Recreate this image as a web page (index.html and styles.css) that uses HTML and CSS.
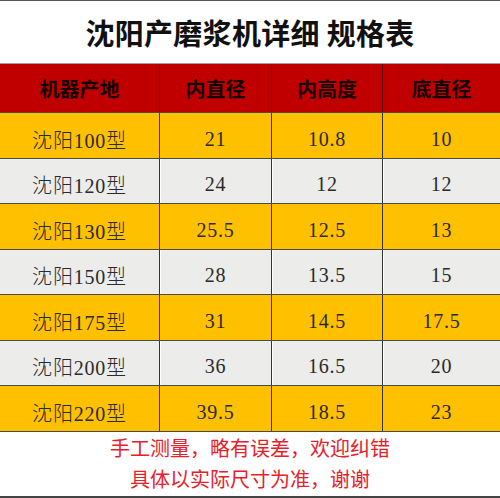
FILE: index.html
```html
<!DOCTYPE html>
<html lang="zh">
<head>
<meta charset="utf-8">
<title>沈阳产磨浆机详细 规格表</title>
<link rel="stylesheet" href="styles.css">
</head>
<body>
<div class="page">
  <h1 class="title">沈阳产磨浆机详细 规格表</h1>
  <div class="table">
    <div class="row head">
      <div class="cell">机器产地</div>
      <div class="cell">内直径</div>
      <div class="cell">内高度</div>
      <div class="cell">底直径</div>
    </div>
    <div class="row yellow">
      <div class="cell">沈阳100型</div>
      <div class="cell">21</div>
      <div class="cell">10.8</div>
      <div class="cell">10</div>
    </div>
    <div class="row gray">
      <div class="cell">沈阳120型</div>
      <div class="cell">24</div>
      <div class="cell">12</div>
      <div class="cell">12</div>
    </div>
    <div class="row yellow">
      <div class="cell">沈阳130型</div>
      <div class="cell">25.5</div>
      <div class="cell">12.5</div>
      <div class="cell">13</div>
    </div>
    <div class="row gray">
      <div class="cell">沈阳150型</div>
      <div class="cell">28</div>
      <div class="cell">13.5</div>
      <div class="cell">15</div>
    </div>
    <div class="row yellow">
      <div class="cell">沈阳175型</div>
      <div class="cell">31</div>
      <div class="cell">14.5</div>
      <div class="cell">17.5</div>
    </div>
    <div class="row gray">
      <div class="cell">沈阳200型</div>
      <div class="cell">36</div>
      <div class="cell">16.5</div>
      <div class="cell">20</div>
    </div>
    <div class="row yellow last">
      <div class="cell">沈阳220型</div>
      <div class="cell">39.5</div>
      <div class="cell">18.5</div>
      <div class="cell">23</div>
    </div>
  </div>
  <div class="note">
    <p>手工测量，略有误差，欢迎纠错</p>
    <p>具体以实际尺寸为准，谢谢</p>
  </div>
</div>
</body>
</html>
```
FILE: styles.css
```css
* { box-sizing: border-box; }
html, body { margin: 0; padding: 0; background: #fff; }
.page {
  width: 500px;
  height: 498px;
  border-top: 1px solid #555;
  display: flex;
  flex-direction: column;
  font-family: "Noto Sans CJK SC", "Noto Sans", sans-serif;
}
.title {
  margin: 0;
  height: 62px;
  display: flex;
  align-items: center;
  justify-content: center;
  font-size: 29px;
  font-weight: 700;
  color: #111;
  letter-spacing: 0.3px;
}
.table { display: flex; flex-direction: column; }
.row {
  display: grid;
  grid-template-columns: 159px 112px 111px 1fr;
  height: 45.5px;
  border-top: 1px solid #4a4a4a;
}
.row.head {
  height: 49px;
  border-top: 1px solid #a0a0a0;
  background: #c00000;
}
.row.last { height: 46.5px; border-bottom: 1px solid #4a4a4a; }
.yellow { background: #ffc000; }
.gray { background: #ececea; }
.cell {
  display: flex;
  align-items: center;
  justify-content: center;
  padding-top: 8px;
  font-family: "Liberation Serif", "Noto Sans CJK SC", serif;
  font-size: 20px;
  font-weight: 300;
  color: #2a2a2a;
  letter-spacing: 0.8px;
}
.cell + .cell { border-left: 1px solid #333; }
.gray .cell + .cell { box-shadow: inset 1px 0 0 #fff; }
.head .cell {
  padding-top: 0;
  font-family: "Noto Sans CJK SC", sans-serif;
  font-weight: 700;
  color: #160000;
  letter-spacing: 0;
}
.head .cell + .cell { border-left-color: #5a0000; }
.note {
  flex: 1;
  border-bottom: 2px solid #444;
  text-align: center;
  color: #e8202a;
  font-size: 20px;
  padding-top: 0;
}
.note p { margin: 0; line-height: 31px; }
```
